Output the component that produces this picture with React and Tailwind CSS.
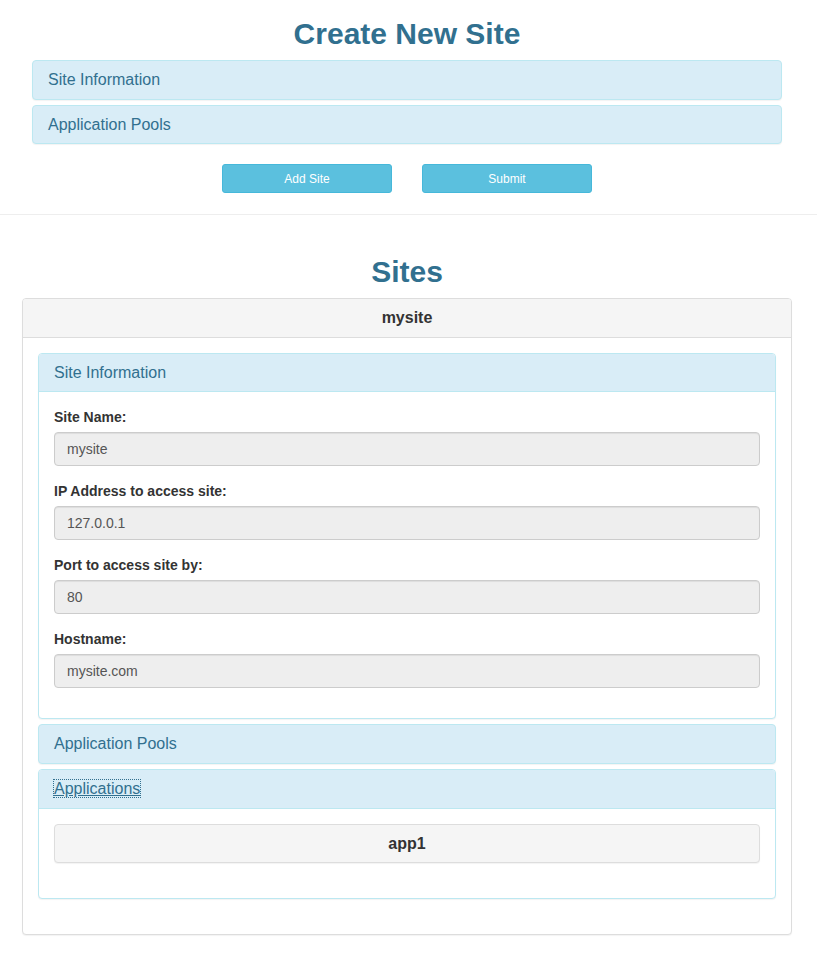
export default function App() {
  const fields = [
    { label: 'Site Name:', value: 'mysite' },
    { label: 'IP Address to access site:', value: '127.0.0.1' },
    { label: 'Port to access site by:', value: '80' },
    { label: 'Hostname:', value: 'mysite.com' },
  ];

  return (
    <div className="min-h-[956px] bg-white text-[14px] text-[#333] font-['Liberation_Sans',Arial,sans-serif]">
      {/* Create form */}
      <div className="ml-[32px] w-[750px]">
        <h1 className="mt-[17px] mb-[10px] text-center text-[30px] leading-[33px] font-bold text-[#31708f]">
          Create New Site
        </h1>
        <div className="flex flex-col gap-[5px]">
          <div className="rounded-[4px] border border-[#bce8f1] bg-[#d9edf7] px-[15px] py-[10px] text-[16px] leading-[18px] text-[#31708f] shadow-[0_1px_1px_rgba(0,0,0,0.05)]">
            Site Information
          </div>
          <div className="rounded-[4px] border border-[#bce8f1] bg-[#d9edf7] px-[15px] py-[10px] text-[16px] leading-[17px] text-[#31708f] shadow-[0_1px_1px_rgba(0,0,0,0.05)]">
            Application Pools
          </div>
        </div>
        <div className="mt-[20px] flex justify-center gap-[30px]">
          <button className="h-[29px] w-[170px] rounded-[3px] border border-[#46b8da] bg-[#5bc0de] text-[12px] text-white">
            Add Site
          </button>
          <button className="h-[29px] w-[170px] rounded-[3px] border border-[#46b8da] bg-[#5bc0de] text-[12px] text-white">
            Submit
          </button>
        </div>
      </div>

      <hr className="mt-[21px] mb-[20px] border-t border-[#eee]" />

      {/* Sites list */}
      <div className="ml-[22px] w-[770px]">
        <h1 className="mt-[40px] mb-[10px] text-center text-[30px] leading-[33px] font-bold text-[#31708f]">
          Sites
        </h1>
        <div className="rounded-[4px] border border-[#ddd] bg-white shadow-[0_1px_1px_rgba(0,0,0,0.05)]">
          <div className="rounded-t-[3px] border-b border-[#ddd] bg-[#f5f5f5] px-[15px] py-[10px] text-center text-[16px] leading-[18px] font-bold">
            mysite
          </div>
          <div className="p-[15px]">
            <div className="mb-[20px] flex flex-col gap-[5px]">
              {/* Site Information */}
              <div className="rounded-[4px] border border-[#bce8f1] bg-white shadow-[0_1px_1px_rgba(0,0,0,0.05)]">
                <div className="rounded-t-[3px] border-b border-[#bce8f1] bg-[#d9edf7] px-[15px] py-[10px] text-[16px] leading-[17px] text-[#31708f]">
                  Site Information
                </div>
                <div className="p-[15px]">
                  {fields.map((f) => (
                    <div key={f.label} className="mb-[15px]">
                      <div className="mb-[5px] text-[14px] leading-[20px] font-bold">{f.label}</div>
                      <div className="h-[34px] rounded-[4px] border border-[#ccc] bg-[#eee] px-[12px] py-[6px] text-[14px] leading-[20px] text-[#555] shadow-[inset_0_1px_1px_rgba(0,0,0,0.075)]">
                        {f.value}
                      </div>
                    </div>
                  ))}
                </div>
              </div>

              {/* Application Pools */}
              <div className="rounded-[4px] border border-[#bce8f1] bg-[#d9edf7] px-[15px] py-[10px] text-[16px] leading-[18px] text-[#31708f] shadow-[0_1px_1px_rgba(0,0,0,0.05)]">
                Application Pools
              </div>

              {/* Applications */}
              <div className="rounded-[4px] border border-[#bce8f1] bg-white shadow-[0_1px_1px_rgba(0,0,0,0.05)]">
                <div className="rounded-t-[3px] border-b border-[#bce8f1] bg-[#d9edf7] px-[15px] py-[10px] text-[16px] leading-[18px] text-[#31708f]">
                  <span className="underline outline-1 outline-dotted outline-[#31708f]">Applications</span>
                </div>
                <div className="p-[15px]">
                  <div className="mb-[20px] rounded-[4px] border border-[#ddd] bg-[#f5f5f5] px-[15px] py-[10px] text-center text-[16px] leading-[17px] font-bold shadow-[0_1px_1px_rgba(0,0,0,0.05)]">
                    app1
                  </div>
                </div>
              </div>
            </div>
          </div>
        </div>
      </div>
    </div>
  );
}
